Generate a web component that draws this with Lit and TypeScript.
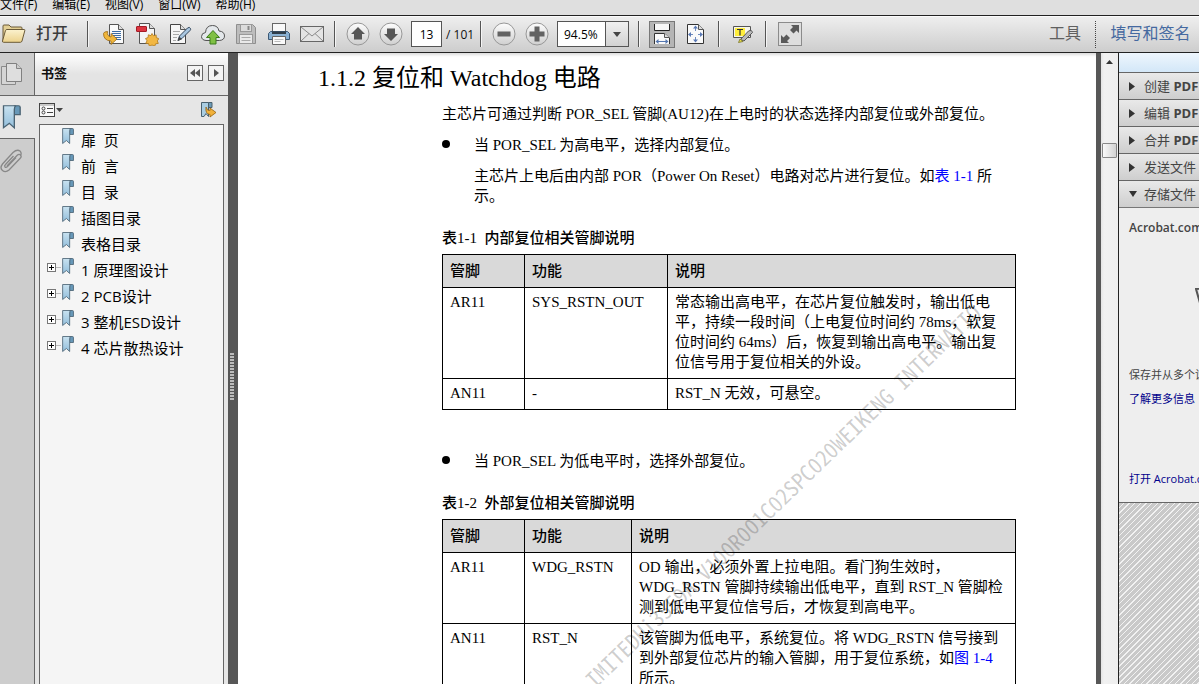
import { LitElement, html, css, svg, nothing } from "lit";
import { customElement, property } from "lit/decorators.js";

const icons = {
  open: svg`<svg width="25" height="22" viewBox="0 0 25 22"><defs><linearGradient id="fo" x1="0" y1="0" x2="0" y2="1"><stop offset="0" stop-color="#fbf2cf"/><stop offset="1" stop-color="#ecd28b"/></linearGradient></defs><path d="M2 19V4q0-1 1-1h5l2 2h10q1 0 1 1v3" fill="#e3cf94" stroke="#6b5a38"/><path d="M1.500 19 4.500 8.500q.4-1 1.500-1h17q1.200 0 .8 1.200L21 19q-.4 1.300-1.600 1.300H2.600Q1.200 20.300 1.500 19z" fill="url(#fo)" stroke="#6b5a38"/></svg>`,
  convert: svg`<svg width="24" height="24" viewBox="0 0 24 24"><path d="M7.500 2.500h9l5 5v14h-14z" fill="#fafafa" stroke="#555"/><path d="M16.500 2.500v5h5" fill="#ddd" stroke="#555"/><path d="M10 9.500h9M10 11.500h9M10 13.500h9M12 15.500h7M13 17.500h6" stroke="#3e6ea6"/><path d="M1.500 11.500q.5-2 4-2-1 4.500 3.500 5.500v-3.500l6 5.500-6 5.500V19Q1.500 18.500 1.500 11.500z" fill="#f0b73d" stroke="#9a6712" stroke-width=".8"/></svg>`,
  create: svg`<svg width="24" height="24" viewBox="0 0 24 24"><path d="M4.500 1.500h10l5 5v15h-15z" fill="#f4f4f4" stroke="#555"/><path d="M14.500 1.500v5h5" fill="#ddd" stroke="#555"/><rect x="1.500" y="4.500" width="10" height="5" rx=".5" fill="#dd3540" stroke="#a51c26"/><path d="M17 11.500l1.500 2.300 2.600-.9.200 2.700 2.500 1.100-1.500 2.200 1 2.500-2.700.4-.9 2.400-2.700-1.200-2.600 1.200-.8-2.500-2.800-.4 1.200-2.500-1.500-2.300 2.600-1 .2-2.700 2.700.8z" fill="#f2b743" stroke="#b07a1c" stroke-width=".8"/></svg>`,
  sign: svg`<svg width="24" height="24" viewBox="0 0 24 24"><path d="M2.500 2.500h10l5 5v14h-15z" fill="#f6f6f6" stroke="#444"/><path d="M12.500 2.500v5h5" fill="#ddd" stroke="#555"/><path d="M5 9.500h7M5 12.500h6M5 15.500h4M5 18.500h3" stroke="#aaa"/><path d="M10 18.500l1.500-4.500 8-8q2-1.500 3 .5.500 1-.5 2l-8 8z" fill="#a9c6e0" stroke="#33465a"/><path d="M9.500 19l1.800-4.500 2.500 2.800z" fill="#444"/></svg>`,
  cloud: svg`<svg width="26" height="24" viewBox="0 0 26 24"><path d="M6 18.500q-4.500-.5-4.500-4Q1.500 11 5.500 10.500 6 3.500 12.500 3.500q5.500 0 6.500 5.500 5.500.5 5.500 5 0 4-5 4.500z" fill="#e4e8eb" stroke="#555"/><path d="M13 8.500l6.500 7H16v6.500h-6v-6.500H6.500z" fill="#7fc043" stroke="#3d7d1c"/></svg>`,
  save: svg`<svg width="22" height="22" viewBox="0 0 22 22"><path d="M1.500 1.500h16l3 3v16h-19z" fill="#bdbdbd" stroke="#8f8f8f"/><rect x="5.500" y="1.500" width="11" height="7" fill="#dcdcdc" stroke="#999"/><path d="M13.500 3v4" stroke="#888" stroke-width="2"/><rect x="4.500" y="11.500" width="13" height="9" fill="#e9e9e9" stroke="#999"/><path d="M6.500 14.500h9M6.500 17.500h9" stroke="#aaa"/></svg>`,
  print: svg`<svg width="24" height="24" viewBox="0 0 24 24"><rect x="5.500" y="1.500" width="13" height="8" fill="#f8f8f8" stroke="#666"/><path d="M3.500 9.500h17l2 2v6h-21v-6z" fill="#89b0d2" stroke="#3c5874"/><path d="M5 9.500v2.500h14V9.500" fill="#2f3d4a"/><path d="M5.500 14.500h13v8h-13z" fill="#fafafa" stroke="#666"/><path d="M7.500 17.500h9M7.500 19.500h6" stroke="#bbb"/></svg>`,
  mail: svg`<svg width="26" height="18" viewBox="0 0 26 18"><rect x="1.500" y="1.500" width="23" height="15" fill="#e4e4e4" stroke="#666"/><path d="M2 2l11 9L24 2M2 16l8-7.500M24 16l-8-7.500" fill="none" stroke="#8a8a8a"/></svg>`,
  pageWidth: svg`<svg width="18" height="22" viewBox="0 0 18 22"><path d="M1.500 1v6.500h15V1" fill="#f6f6f6" stroke="#222"/><path d="M1.500 21v-10.500h10l5 4.500v6" fill="#fafafa" stroke="#333"/><path d="M11.500 10.500v4h5" fill="#ddd" stroke="#555"/><path d="M4 18.500h10" stroke="#5577b0"/><path d="M2.500 18.500l3-2.500v5zM15.500 18.500l-3-2.500v5z" fill="#5577b0"/></svg>`,
  pageFit: svg`<svg width="19" height="22" viewBox="0 0 19 22"><path d="M1.500 1.500h11l5 5v14h-16z" fill="#fafafa" stroke="#333"/><path d="M12.500 1.500v5h5" fill="#ddd" stroke="#555"/><path d="M9.500 4v4M9.500 14v4M3 11.500h4M12 11.500h4" stroke="#6f8cc0"/><path d="M9.500 2.500l2.500 3H7zM9.500 19.500l2.500-3H7zM2 11.500l3-2.500v5zM17 11.500l-3-2.500v5z" fill="#5b7ab5"/></svg>`,
  note: svg`<svg width="22" height="20" viewBox="0 0 22 20"><path d="M1.500 2.500h17v11h-17z" fill="#f6f6ee" stroke="#555"/><rect x="3" y="4" width="10" height="8" fill="#ffee3c"/><path d="M5 5.500h6M8 5.500v6" stroke="#333" stroke-width="1.200"/><path d="M8.500 15.500l8-8.500q3.500-1.500 4 1.500L12 17z" fill="#b9b9b9" stroke="#555"/><path d="M6.500 18.500l1.500-3.500 3 2.500z" fill="#e9df4a" stroke="#77732a" stroke-width=".8"/></svg>`,
  expand: svg`<svg width="24" height="24" viewBox="0 0 24 24"><rect x=".5" y=".5" width="23" height="23" fill="#dedede" stroke="#8b8b8b"/><path d="M13 3h8v8l-2.500-2.500-3 3-3.500-3.500 3-3zM3 13l2.500 2.500 3-3 3.500 3.500-3 3L11 21H3z" fill="#595959"/></svg>`,
  pages: svg`<svg width="24" height="26" viewBox="0 0 24 26"><path d="M1.500 5.500h14v18h-14z" fill="#d5d5d5" stroke="#8a8a8a"/><path d="M6.500 2.500h10l5 5v13h-15z" fill="#dedede" stroke="#808080"/><path d="M16.500 2.500v5h5" fill="#ccc" stroke="#858585"/></svg>`,
  clip: svg`<svg width="24" height="26" viewBox="0 0 24 26"><path d="M7 18 17 7.500q2-2 3.500-.5t-.5 3.500L9 22q-3.500 3-6.500.5T2.500 16L13 4.500q4-3.500 7-1.500 2 2 .5 5" fill="none" stroke="#888" stroke-width="1.300"/><path d="M16 9.500 7.500 18.500q-1.500 1.500-2.500.5t.5-2.500L13.500 8" fill="none" stroke="#888" stroke-width="1.300"/></svg>`,
  options: svg`<svg width="26" height="16" viewBox="0 0 26 16"><rect x=".5" y="1.500" width="15" height="13" fill="#fafafa" stroke="#444"/><path d="M1 3h14" stroke="#999"/><circle cx="4.500" cy="6.500" r="1.500" fill="none" stroke="#444"/><circle cx="4.500" cy="10.500" r="1.500" fill="none" stroke="#444"/><path d="M8 6.500h6M8 10.500h6" stroke="#444"/><path d="M17 6h7l-3.500 4z" fill="#444"/></svg>`,
  find: svg`<svg width="18" height="18" viewBox="0 0 18 18"><path d="M9.500 1.500h3.500v5h-3.500z" fill="#6c9bb8" stroke="#48606e"/><path d="M2.500 1.500h7v14L7 12.500l-2 3H2.500z" fill="#a9cde2" stroke="#48606e"/><path d="M7 6q1 4 4 3.500V7l6 4.500-6 4.500v-2.500Q6 13 7 6z" fill="#f1b13a" stroke="#96620f" stroke-width=".8"/></svg>`,
};

const bookmarkIcon = (w: number, h: number) => svg`<svg width=${w} height=${h} viewBox="0 0 12 17" preserveAspectRatio="none"><defs><linearGradient id="bm" x1="0" y1="0" x2="0" y2="1"><stop offset="0" stop-color="#c9e2f0"/><stop offset="1" stop-color="#92bedb"/></linearGradient></defs><path d="M8 .5h2.500q1 0 1 1v5H8z" fill="#6798b8" stroke="#4a6373" stroke-width=".8"/><path d="M1.500.5H9Q8 1 8 3v12.500l-3-3-3.500 3z" fill="url(#bm)" stroke="#4a6373" stroke-width=".8"/></svg>`;

const round = (glyph: unknown) => svg`<svg width="24" height="24" viewBox="0 0 24 24"><defs><linearGradient id="rg" x1="0" y1="0" x2="0" y2="1"><stop offset="0" stop-color="#fdfdfd"/><stop offset="1" stop-color="#cfcfcf"/></linearGradient></defs><circle cx="12" cy="12" r="11" fill="url(#rg)" stroke="#979797"/>${glyph}</svg>`;

const circles = {
  up: round(svg`<path d="M12 5l7 7h-3v5.500H8V12H5z" fill="#575757"/>`),
  down: round(svg`<path d="M12 19l7-7h-3V6.500H8V12H5z" fill="#575757"/>`),
  minus: round(svg`<rect x="5.500" y="9.500" width="13" height="5" fill="#636363"/>`),
  plus: round(svg`<path d="M9.500 4.500h5v5h5v5h-5v5h-5v-5h-5v-5h5z" fill="#636363"/>`),
};

const reset = css`
  *, *::before, *::after { box-sizing: border-box; }
  button, input, select {
    font: inherit;
    color: inherit;
    margin: 0;
    padding: 0;
    border: 0;
    border-radius: 0;
    background: none;
  }
  button { display: inline-flex; align-items: center; justify-content: center; flex: none; }
  svg { display: block; flex: none; }
`;

@customElement("reader-toolbar")
class ReaderToolbar extends LitElement {
  static styles = [reset, css`
    :host { display: block; flex: none; }
    .menu {
      display: flex;
      height: 15px;
      overflow: hidden;
      background: #dfdfdf;
      font-size: 12px;
      line-height: 18px;
      color: #000;
      gap: 15px;
    }
    .menu button { align-self: flex-start; height: 18px; margin-top: -4px; white-space: nowrap; }
    .bar {
      display: flex;
      align-items: center;
      height: 38px;
      border-top: 1px solid #222;
      border-bottom: 1px solid #222;
      background: linear-gradient(#efefef, #cdcdcd);
      box-shadow: inset 0 1px #fbfbfb;
      color: #3c3c3c;
      overflow: hidden;
    }
    .open { width: 87px; justify-content: flex-start; gap: 10px; padding-left: 1px; font-size: 16px; font-weight: 500; line-height: 24px; padding-bottom: 2px; }
    .sep { flex: none; width: 2px; height: 26px; background: #555; border-right: 1px solid #f5f5f5; }
    .group { display: flex; align-items: center; flex: none; }
    .files { padding: 0 6px 0 8px; }
    .nav { padding-left: 5px; width: 144px; }
    .zoom { padding: 0 9px 0 5px; }
    .tool { width: 33px; height: 34px; }
    .page { flex: none; width: 31px; height: 26px; margin: 0 4px; border: 1px solid #555; background: #fff; text-align: center; font-size: 12px; color: #000; }
    .total { font-size: 12px; color: #111; white-space: nowrap; }
    .combo { display: grid; width: 72px; height: 26px; margin-left: 4px; border: 1px solid #555; background: #fff; }
    .combo select { grid-area: 1 / 1; appearance: none; padding-left: 6px; font-size: 12px; color: #000; }
    .arrow { grid-area: 1 / 1; justify-self: end; display: grid; place-items: center; width: 23px; border-left: 1px solid #555; background: linear-gradient(#f0f0f0, #d2d2d2); pointer-events: none; }
    .fits { padding: 0 6px 0 9px; gap: 4px; }
    .pressed { width: 26px; height: 27px; border: 1px solid #777; background: #b5b5b5; }
    .wide { width: 45px; height: 34px; }
    .grow { flex: 1; }
    .tab { font-size: 16px; height: 34px; color: #606060; white-space: nowrap; line-height: 24px; padding-bottom: 2px; }
    .tools { width: 60px; }
    .fill { width: 104px; color: #4569a0; border-left: 1px dotted #444; height: 27px; padding-left: 6px; }
  `];

  render() {
    const menus = ["文件(F)", "编辑(E)", "视图(V)", "窗口(W)", "帮助(H)"];
    const files: [string, unknown][] = [
      ["转换", icons.convert], ["创建", icons.create], ["签名", icons.sign], ["上传", icons.cloud],
      ["保存", icons.save], ["打印", icons.print], ["邮件", icons.mail],
    ];
    return html`
      <nav class="menu">${menus.map((m) => html`<button>${m}</button>`)}</nav>
      <div class="bar">
        <button class="open">${icons.open}<span>打开</span></button>
        <i class="sep"></i>
        <div class="group files">
          ${files.map(([label, icon]) => html`<button class="tool" aria-label=${label}>${icon}</button>`)}
        </div>
        <i class="sep"></i>
        <div class="group nav">
          <button class="tool" aria-label="上一页">${circles.up}</button>
          <button class="tool" aria-label="下一页">${circles.down}</button>
          <input class="page" aria-label="页码" .value=${"13"} />
          <span class="total">/ 101</span>
        </div>
        <i class="sep"></i>
        <div class="group zoom">
          <button class="tool" aria-label="缩小">${circles.minus}</button>
          <button class="tool" aria-label="放大">${circles.plus}</button>
          <div class="combo">
            <select aria-label="缩放"><option>94.5%</option></select>
            <span class="arrow"><svg width="8" height="5" viewBox="0 0 8 5"><path d="M0 0h8L4 5z" fill="#444"/></svg></span>
          </div>
        </div>
        <i class="sep"></i>
        <div class="group fits">
          <button class="pressed" aria-label="适合宽度">${icons.pageWidth}</button>
          <button class="tool" aria-label="适合页面">${icons.pageFit}</button>
        </div>
        <i class="sep"></i>
        <button class="wide" aria-label="注释">${icons.note}</button>
        <i class="sep"></i>
        <button class="wide" aria-label="全屏">${icons.expand}</button>
        <span class="grow"></span>
        <button class="tab tools">工具</button>
        <button class="tab fill">填写和签名</button>
      </div>
    `;
  }
}

@customElement("bookmark-panel")
class BookmarkPanel extends LitElement {
  @property({ attribute: false }) items: { text: string; parent?: boolean }[] = [
    { text: "扉  页" }, { text: "前  言" }, { text: "目  录" }, { text: "插图目录" }, { text: "表格目录" },
    { text: "1 原理图设计", parent: true }, { text: "2 PCB设计", parent: true },
    { text: "3 整机ESD设计", parent: true }, { text: "4 芯片散热设计", parent: true },
  ];

  static styles = [reset, css`
    :host { display: grid; grid-template-columns: 35px 193px; min-height: 0; background: #e6e6e6; }
    .strip { display: flex; flex-direction: column; }
    .strip button { justify-content: flex-start; border-right: 1px solid #666; background: #cdcdcd; }
    .thumbs { height: 43px; border-bottom: 1px solid #666; }
    .strip .marks { height: 43px; padding-left: 1px; background: #e6e6e6; border-right: 0; border-bottom: 1px solid #666; }
    .clips { height: 44px; }
    .rest { flex: 1; background: #cdcdcd; border-right: 1px solid #666; }
    .panel { display: flex; flex-direction: column; min-height: 0; }
    .head { display: flex; align-items: center; gap: 5px; height: 43px; flex: none; padding: 0 4px 3px 6px; border-bottom: 1px solid #666; background: linear-gradient(#fff, #e4e4e4 50%, #e4e4e4); }
    .title { flex: 1; margin: 0; font-size: 13px; line-height: 20px; font-weight: 700; color: #111; }
    .head button { width: 16px; height: 16px; border: 1px solid #666; background: #f4f4f4; }
    .actions { display: flex; align-items: center; justify-content: space-between; flex: none; height: 28px; padding: 0 11px 0 4px; }
    .tree { flex: 1; min-height: 0; overflow: hidden; margin: 0 4px; padding: 2px 0 0; list-style: none; border: 1px solid #666; border-bottom: 0; background: #f5f5f5; font-size: 15px; color: #000; }
    .row { display: flex; align-items: flex-start; height: 26px; padding-left: 7px; }
    .toggle { width: 9px; height: 9px; margin-top: 6px; border: 1px solid #777; background: #fff; }
    .stem { width: 5px; height: 1px; margin-top: 10px; background: #bbb; }
    .blank { width: 14px; }
    .mark { height: 26px; gap: 7px; align-items: flex-start; padding-top: 1px; white-space: pre; line-height: 24px; }
  `];

  render() {
    return html`
      <div class="strip">
        <button class="thumbs" aria-label="页面缩略图">${icons.pages}</button>
        <button class="marks" aria-label="书签">${bookmarkIcon(20, 25)}</button>
        <button class="clips" aria-label="附件">${icons.clip}</button>
        <div class="rest"></div>
      </div>
      <section class="panel">
        <header class="head">
          <h2 class="title">书签</h2>
          <button aria-label="折叠"><svg width="12" height="10" viewBox="0 0 12 10"><path d="M6 1v8L1 5zM11 1v8L6 5z" fill="#555"/></svg></button>
          <button aria-label="展开"><svg width="6" height="10" viewBox="0 0 6 10"><path d="M1 1v8l5-4z" fill="#555"/></svg></button>
        </header>
        <div class="actions">
          <button aria-label="选项">${icons.options}</button>
          <button aria-label="查找书签">${icons.find}</button>
        </div>
        <ul class="tree">
          ${this.items.map((it) => html`
            <li class="row">
              ${it.parent
                ? html`<button class="toggle" aria-label="展开"><svg width="7" height="7" viewBox="0 0 7 7"><path d="M1 3.500h5M3.500 1v5" stroke="#000"/></svg></button><i class="stem"></i>`
                : html`<i class="blank"></i>`}
              <button class="mark">${bookmarkIcon(13, 17)}<span>${it.text}</span></button>
            </li>`)}
        </ul>
      </section>
    `;
  }
}

@customElement("document-page")
class DocumentPage extends LitElement {
  static styles = [reset, css`
    :host {
      display: block;
      position: relative;
      min-width: 0;
      overflow: hidden;
      background: #fff;
      box-shadow: inset 0 4px 3px -2px #ddd;
      color: #000;
      font-family: "Liberation Serif", "Noto Sans CJK SC", serif;
      font-size: 15px;
      line-height: 20px;
    }
    .sheet { padding: 10px 80px 0 204px; white-space: nowrap; }
    .heading { margin: 0 0 11px -124px; font-size: 24px; line-height: 30px; font-weight: 400; }
    .text { margin: 0 0 11px; }
    .list { margin: 0; padding: 0; list-style: none; }
    .item { display: grid; grid-template-columns: 32px 1fr; margin: 0; }
    .item::before { content: ""; width: 8px; height: 8px; margin-top: 5px; border-radius: 50%; background: #000; }
    .more { margin: 11px 0 0 32px; }
    .second { margin-top: 41px; }
    .grid { width: 100%; border-collapse: collapse; table-layout: fixed; margin-top: 22px; }
    .grid caption { text-align: left; font-size: 15px; font-weight: 500; line-height: 20px; padding-bottom: 6px; white-space: pre; }
    .grid th, .grid td { border: 1px solid #000; padding: 4px 7px 6px; text-align: left; vertical-align: top; font-weight: 400; }
    .grid th { padding: 6px 7px; font-weight: 500; background: #d9d9d9; }
    .c1 { width: 82px; }
    .c2 { width: 143px; }
    .c3 { width: 107px; }
    a { color: #00f; text-decoration: none; }
    .watermark {
      position: absolute;
      left: 350px;
      top: 617px;
      transform: rotate(-44deg);
      transform-origin: 0 50%;
      font-family: "Noto Sans CJK SC", sans-serif;
      font-feature-settings: "hwid";
      font-weight: 400;
      font-size: 22px;
      line-height: 24px;
      white-space: pre;
      color: rgba(0, 0, 0, 0.2);
      pointer-events: none;
    }
  `];

  render() {
    return html`
      <article class="sheet">
        <h1 class="heading">1.1.2 复位和 Watchdog 电路</h1>
        <p class="text">主芯片可通过判断 POR_SEL 管脚(AU12)在上电时的状态选择内部复位或外部复位。</p>
        <ul class="list"><li class="item">当 POR_SEL 为高电平，选择内部复位。</li></ul>
        <p class="more">主芯片上电后由内部 POR（Power On Reset）电路对芯片进行复位。如<a href="#t1">表 1-1</a> 所<br />示。</p>
        <table class="grid" id="t1">
          <caption>表1-1  内部复位相关管脚说明</caption>
          <colgroup><col class="c1" /><col class="c2" /><col /></colgroup>
          <thead><tr><th>管脚</th><th>功能</th><th>说明</th></tr></thead>
          <tbody>
            <tr><td>AR11</td><td>SYS_RSTN_OUT</td><td>常态输出高电平，在芯片复位触发时，输出低电<br />平，持续一段时间（上电复位时间约 78ms，软复<br />位时间约 64ms）后，恢复到输出高电平。输出复<br />位信号用于复位相关的外设。</td></tr>
            <tr><td>AN11</td><td>-</td><td>RST_N 无效，可悬空。</td></tr>
          </tbody>
        </table>
        <ul class="list second"><li class="item">当 POR_SEL 为低电平时，选择外部复位。</li></ul>
        <table class="grid">
          <caption>表1-2  外部复位相关管脚说明</caption>
          <colgroup><col class="c1" /><col class="c3" /><col /></colgroup>
          <thead><tr><th>管脚</th><th>功能</th><th>说明</th></tr></thead>
          <tbody>
            <tr><td>AR11</td><td>WDG_RSTN</td><td>OD 输出，必须外置上拉电阻。看门狗生效时，<br />WDG_RSTN 管脚持续输出低电平，直到 RST_N 管脚检<br />测到低电平复位信号后，才恢复到高电平。</td></tr>
            <tr><td>AN11</td><td>RST_N</td><td>该管脚为低电平，系统复位。将 WDG_RSTN 信号接到<br />到外部复位芯片的输入管脚，用于复位系统，如<a href="#f14">图 1-4</a><br />所示。</td></tr>
          </tbody>
        </table>
      </article>
      <div class="watermark">IMITEDHi3559A V100R001C02SPC020WEIKENG INTERNATIO</div>
    `;
  }
}

@customElement("task-panel")
class TaskPanel extends LitElement {
  static styles = [reset, css`
    :host { display: flex; flex-direction: column; min-width: 0; overflow: hidden; border-left: 1px solid #222; background: #eee; white-space: nowrap; font-size: 13px; color: #444; }
    .top { flex: none; height: 19px; background: linear-gradient(#eef6fd, #d3e7f8); }
    .task { justify-content: flex-start; gap: 7px; height: 27px; padding-left: 10px; border-top: 1px solid #666; background: linear-gradient(#e9e9e9, #cecece); line-height: 20px; }
    .body { flex: none; height: 296px; padding: 10px 0 0 10px; border-top: 1px solid #777; border-bottom: 1px solid #666; font-size: 11px; line-height: 20px; }
    .name { margin: 0; font-size: 12px; line-height: 20px; font-weight: 600; }
    .pic { margin: 50px 0 0 66px; }
    .body p { margin: 0; }
    .note { padding-top: 61px; }
    .link { padding-top: 4px; }
    .last { padding-top: 60px; }
    a { color: #00008b; text-decoration: none; }
    .hatch { flex: 1; background: repeating-linear-gradient(135deg, #c9c9c9 0 3px, #f2f2f2 3px 4px); }
  `];

  render() {
    const right = svg`<svg width="8" height="9" viewBox="0 0 8 9"><path d="M0 0v9l6-4.500z" fill="#333"/></svg>`;
    const down = svg`<svg width="8" height="7" viewBox="0 0 8 7"><path d="M0 0h8L4 6z" fill="#333"/></svg>`;
    const tasks: [string, string][] = [["创建", "PDF"], ["编辑", "PDF"], ["合并", "PDF"], ["发送文件", ""], ["存储文件", ""]];
    return html`
      <div class="top"></div>
      ${tasks.map(([text, kind], i) => html`<button class="task">${i === 4 ? down : right}<span>${text}${kind ? html` <b>${kind}</b>` : nothing}</span></button>`)}
      <div class="body">
        <h3 class="name">Acrobat.com</h3>
        <svg class="pic" width="24" height="16" viewBox="0 0 24 16"><path d="M1 1l20-2 2 16H5z" fill="#e5e5e5" stroke="#555" stroke-width="2"/></svg>
        <p class="note">保存并从多个设备访问</p>
        <p class="link"><a href="#more">了解更多信息</a></p>
        <p class="last"><a href="#open">打开 Acrobat.com</a></p>
      </div>
      <div class="hatch"></div>
    `;
  }
}

@customElement("app-root")
class AppRoot extends LitElement {
  static styles = [reset, css`
    :host {
      display: flex;
      flex-direction: column;
      height: 100vh;
      overflow: hidden;
      background: #575757;
      font-family: "Open Sans", "Noto Sans CJK SC", sans-serif;
    }
    .main { flex: 1; min-height: 0; display: grid; grid-template-columns: auto 10px minmax(0, 1fr) 5px 17px 81px; grid-template-rows: minmax(0, 1fr); }
    .splitter { padding: 300px 0 0 2px; }
    .grip { width: 4px; height: 48px; background: radial-gradient(circle at 1px 1px, #bbb 1px, transparent 1px) 0 0 / 2px 3px; }
    .scroll { display: flex; flex-direction: column; align-items: center; background: linear-gradient(90deg, #e4e4e4, #f1f1f1 3px, #eee); }
    .up { width: 17px; height: 17px; }
    .thumb { width: 15px; height: 15px; margin-top: 73px; border: 1px solid #888; border-radius: 1px; background: linear-gradient(90deg, #fafafa, #d2d2d2); }
  `];

  render() {
    return html`
      <reader-toolbar></reader-toolbar>
      <div class="main">
        <bookmark-panel></bookmark-panel>
        <div class="splitter"><div class="grip"></div></div>
        <document-page></document-page>
        <div></div>
        <div class="scroll">
          <button class="up" aria-label="向上滚动"><svg width="7" height="4" viewBox="0 0 7 4"><path d="M0 4h7L3.500 0z" fill="#333"/></svg></button>
          <div class="thumb"></div>
        </div>
        <task-panel></task-panel>
      </div>
    `;
  }
}
